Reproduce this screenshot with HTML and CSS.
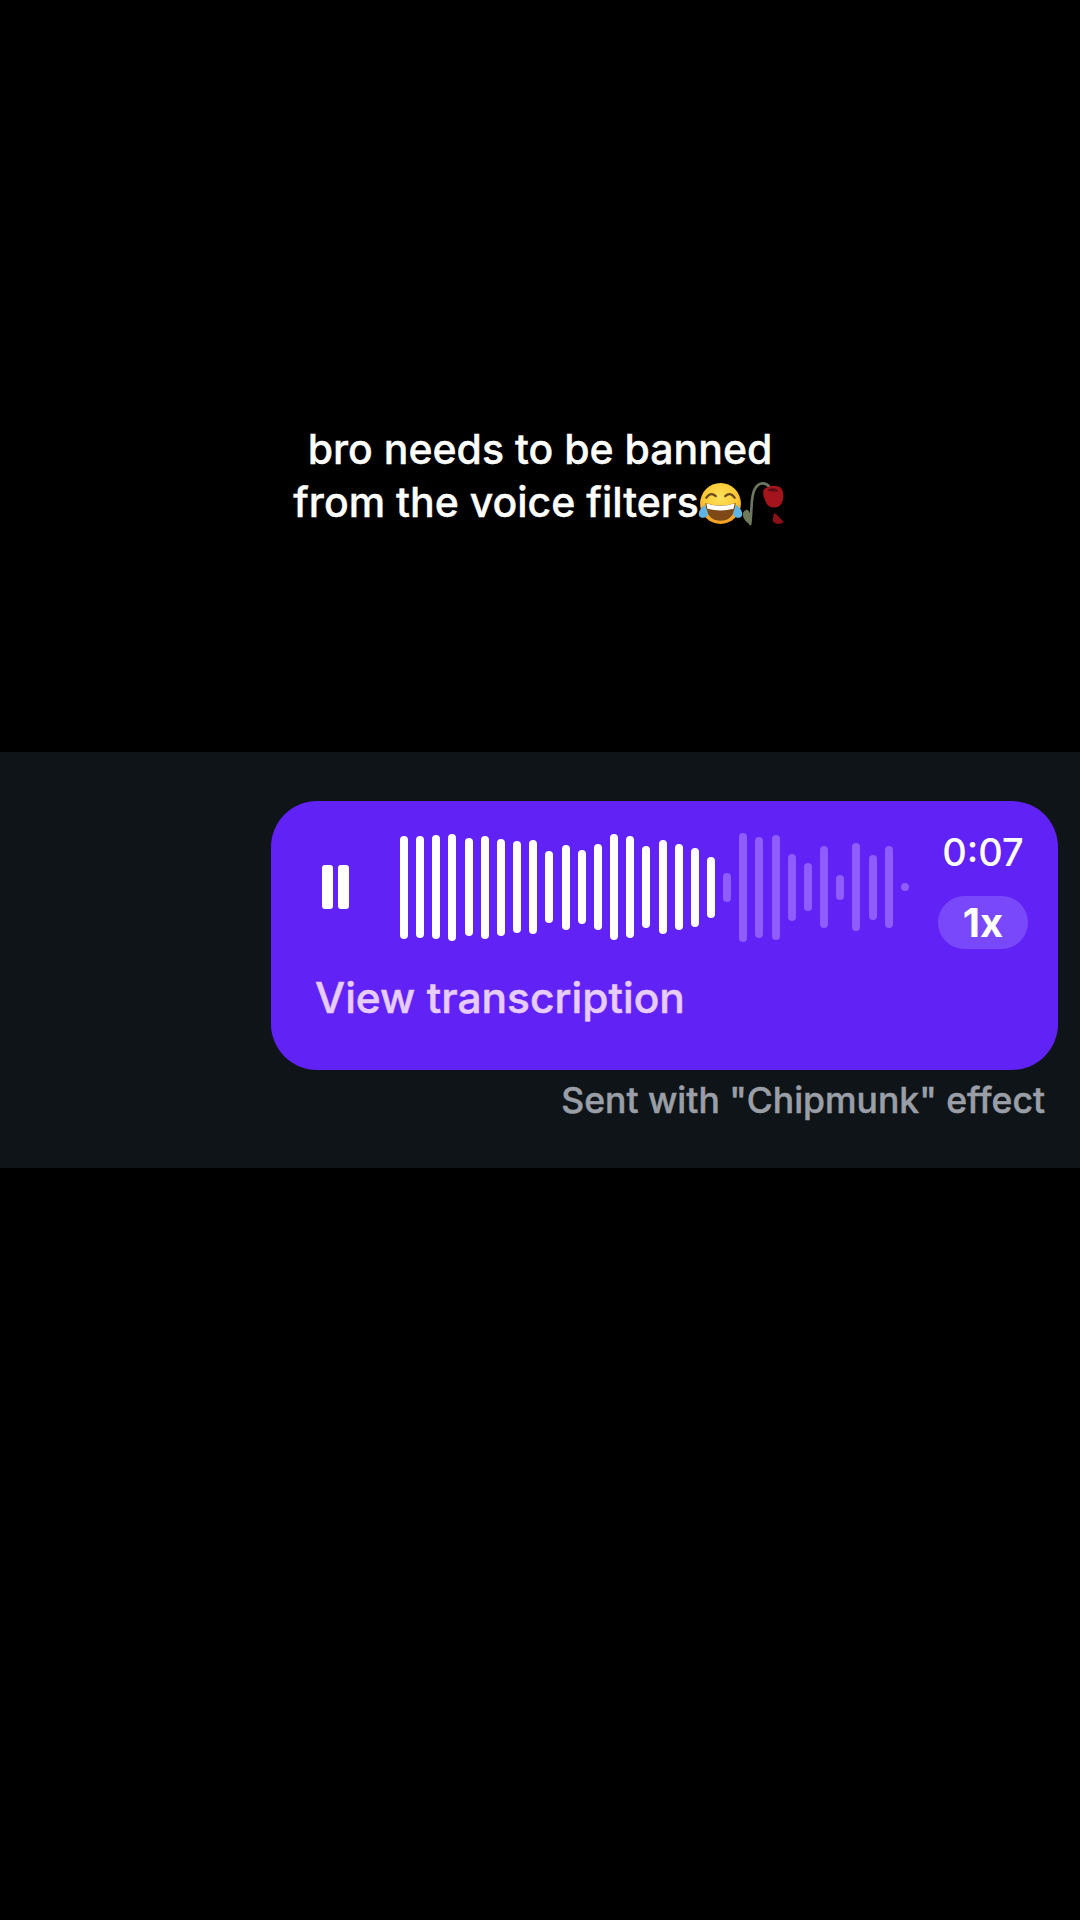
FILE: index.html
```html
<!DOCTYPE html>
<html lang="en">
<head>
  <meta charset="UTF-8">
  <title>Voice message</title>
  <link rel="stylesheet" href="styles.css">
</head>
<body>

  <div class="caption">
    <p>bro needs to be banned</p>
    <p>from the voice filters<svg class="emoji face" width="45" height="44" viewBox="0 0 43 42">
        <defs>
          <radialGradient id="faceFill" cx="50%" cy="35%" r="70%">
            <stop offset="0" stop-color="#ffe25a"/>
            <stop offset="0.6" stop-color="#fcc733"/>
            <stop offset="1" stop-color="#f0901e"/>
          </radialGradient>
        </defs>
        <circle cx="21.500" cy="20.500" r="19.500" fill="url(#faceFill)"/>
        <path d="M8 15 Q12 9 17 13.500" fill="none" stroke="#6b4a1e" stroke-width="2.200" stroke-linecap="round"/>
        <path d="M26 13.500 Q31 9 35 15" fill="none" stroke="#6b4a1e" stroke-width="2.200" stroke-linecap="round"/>
        <path d="M7 20 Q21.500 25 36 20 Q35 37 21.500 37 Q8 37 7 20Z" fill="#7d4a17"/>
        <path d="M8 20.500 Q21.500 25 35 20.500 L34 25.500 Q21.500 29 9 25.500Z" fill="#fff"/>
        <path d="M6 22 C2 26 0 29 1 32 C2 35 7 35 9 32 C10 29 8 25 6 22Z" fill="#5fb4e6"/>
        <path d="M37 22 C41 26 43 29 42 32 C41 35 36 35 34 32 C33 29 35 25 37 22Z" fill="#5fb4e6"/>
      </svg><svg class="emoji" width="44" height="45" viewBox="0 0 43 44">
        <path d="M7 42 C9 30 7 14 12 7 C16 1 22 1 26 6" fill="none" stroke="#6c7660" stroke-width="2.600" stroke-linecap="round"/>
        <path d="M0 31 C4 25 8 28 8 43 C3 41 -1 36 0 31Z" fill="#6f7a58"/>
        <path d="M20 9 C24 4 34 3 38 8 C41 14 39 22 35 25 C30 27 25 26 23 22 C21 18 19 13 20 9Z" fill="#a3141c"/>
        <path d="M24 9 C28 6 33 7 35 10 C31 10 27 11 24 9Z" fill="#5e0c12"/>
        <path d="M30 32 C33 31 35 36 40 40 C36 43 31 42 29 39Z" fill="#8c1017"/>
      </svg></p>
  </div>

  <div class="panel">
    <div class="bubble">
      <div class="player">
        <div class="pause"><span></span><span></span></div>

        <div class="wave">
          <span style="height:103px"></span>
          <span style="height:102px"></span>
          <span style="height:104px"></span>
          <span style="height:107px"></span>
          <span style="height:98px"></span>
          <span style="height:103px"></span>
          <span style="height:97px"></span>
          <span style="height:92px"></span>
          <span style="height:94px"></span>
          <span style="height:72px"></span>
          <span style="height:85px"></span>
          <span style="height:74px"></span>
          <span style="height:86px"></span>
          <span style="height:106px"></span>
          <span style="height:102px"></span>
          <span style="height:82px"></span>
          <span style="height:94px"></span>
          <span style="height:86px"></span>
          <span style="height:79px"></span>
          <span style="height:61px"></span>
          <span class="left" style="height:29px"></span>
          <span class="left" style="height:109px"></span>
          <span class="left" style="height:101px"></span>
          <span class="left" style="height:105px"></span>
          <span class="left" style="height:67px"></span>
          <span class="left" style="height:48px"></span>
          <span class="left" style="height:82px"></span>
          <span class="left" style="height:25px"></span>
          <span class="left" style="height:88px"></span>
          <span class="left" style="height:65px"></span>
          <span class="left" style="height:82px"></span>
          <span class="left" style="height:8px"></span>
        </div>

        <div class="meta">
          <div class="time">0:07</div>
          <div class="speed">1x</div>
        </div>
      </div>
      <div class="transcribe">View transcription</div>
    </div>
    <div class="effect">Sent with "Chipmunk" effect</div>
  </div>

</body>
</html>
```

FILE: styles.css
```css
html, body { margin: 0; background: #000; }
body { height: 1920px; overflow: hidden; font-family: Inter, "Liberation Sans", sans-serif; }

.caption { height: 752px; box-sizing: border-box; padding-top: 423px; color: #fff; font-size: 41px; font-weight: 500; line-height: 53px; text-align: center; -webkit-text-stroke: 0.4px #fff; }
.caption p { margin: 0; white-space: nowrap; }
.emoji { vertical-align: -9px; }
.face { margin-left: -1px; }

.panel { height: 416px; box-sizing: border-box; padding: 49px 22px 0 0; background: #0f1418; display: flex; flex-direction: column; align-items: flex-end; }

.bubble { width: 787px; height: 269px; box-sizing: border-box; padding: 26px 30px 0 51px; background: #6122f6; border-radius: 46px; }

.player { display: flex; align-items: center; height: 120px; }
.pause { display: flex; gap: 5px; margin-right: 51px; }
.pause span { width: 11px; height: 44px; background: #fff; border-radius: 3px; }

.wave { display: flex; align-items: center; gap: 8.16px; width: 506px; height: 120px; }
.wave span { flex: none; width: 8px; background: #fff; border-radius: 4px; }
.wave .left { background: #8f5cff; }

.meta { margin-left: 32px; width: 90px; display: flex; flex-direction: column; align-items: center; }
.time { margin-top: 5px; color: #fff; font-size: 38px; font-weight: 500; line-height: 44px; }
.speed { margin-top: 22px; width: 90px; height: 53px; background: #7a48fb; border-radius: 27px; color: #fff; font-size: 40px; font-weight: 700; line-height: 53px; text-align: center; }

.transcribe { margin: 26px 0 0 -7px; color: #e7ccff; font-size: 42.500px; font-weight: 500; line-height: 50px; -webkit-text-stroke: 0.5px #e7ccff; }

.effect { margin: 11px 13px 0 0; color: #9a9ea6; font-size: 35.500px; font-weight: 500; line-height: 40px; -webkit-text-stroke: 0.5px #9a9ea6; }
```
